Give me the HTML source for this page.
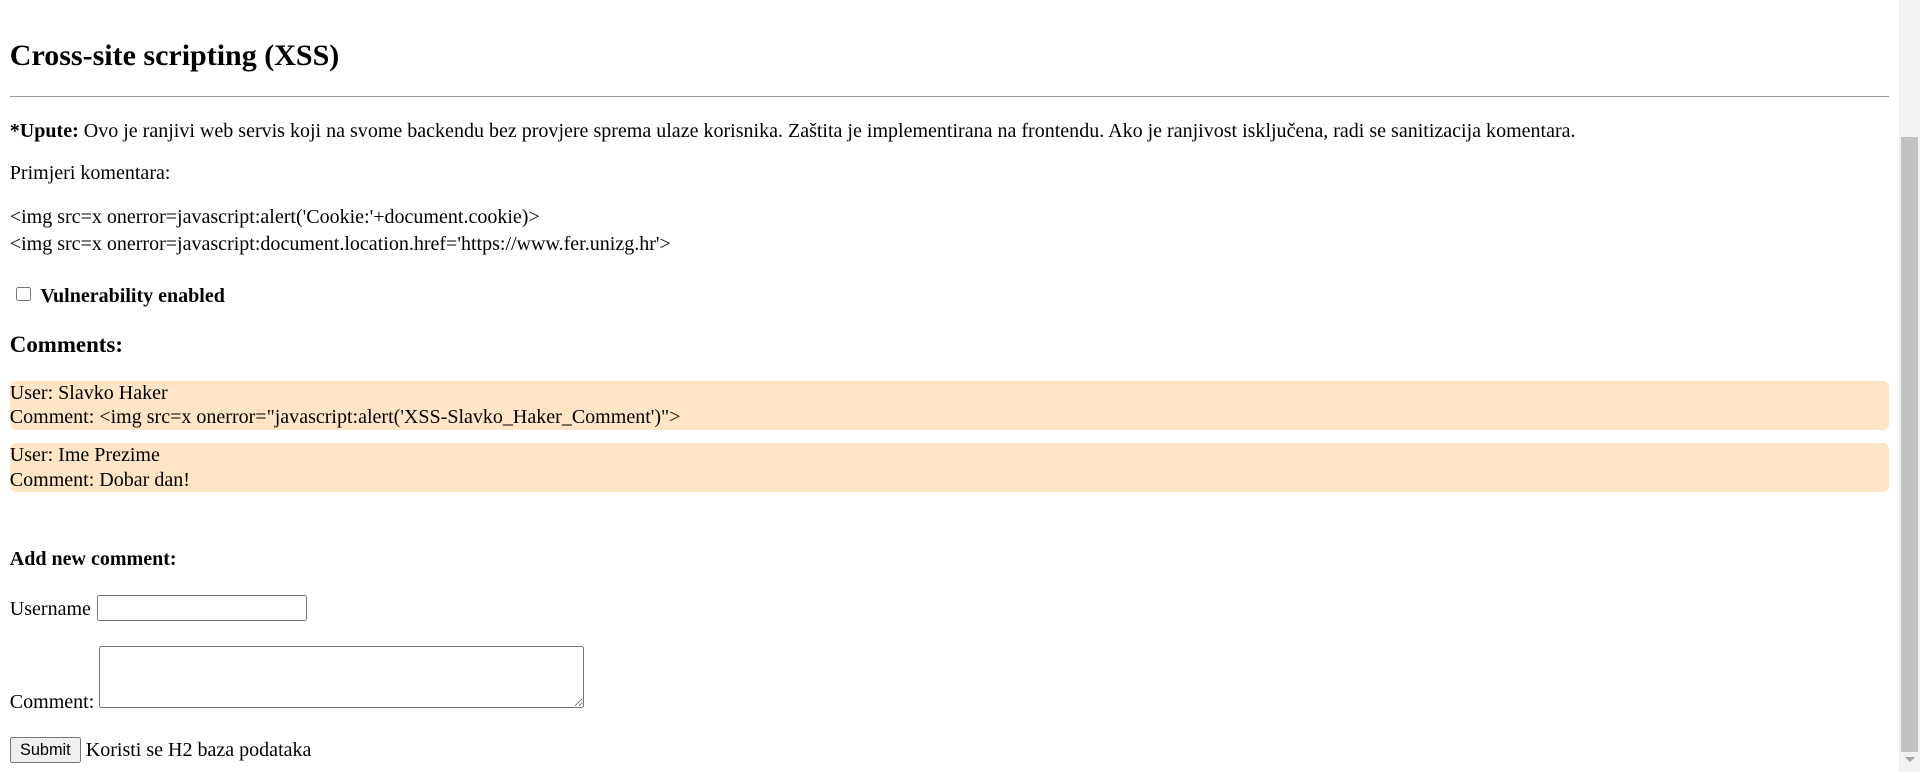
<!DOCTYPE html>
<html><head><meta charset="utf-8"><style>
html,body{margin:0;padding:0;width:1920px;height:772px;overflow:hidden;background:#fff}
#w{position:absolute;left:0;top:0;width:1550px;height:630px;zoom:1.225;font-family:"Liberation Serif",serif;font-size:16.35px;color:#000}
#w>*{position:absolute;margin:0;white-space:nowrap}
.l{left:8px;line-height:18px}
h2{font-size:24.5px;line-height:28px;left:8px}
hr{left:8px;width:1534px;border:0;border-top:1px solid #9a9a9a;height:0}
.box{left:8px;width:1534px;background:#ffe5c5;border-radius:5px;line-height:20px}
input,textarea,button{position:absolute;box-sizing:border-box;margin:0}
#sb{position:absolute;left:1899px;top:0;width:21px;height:772px;background:#f1f1f1}
#th{position:absolute;left:1901px;top:137px;width:17px;height:615px;background:#c1c1c1}
#ar{position:absolute;left:1905px;top:757px;width:0;height:0;border-left:5px solid transparent;border-right:5px solid transparent;border-top:5px solid #a3a3a3}
</style></head><body>
<div id="w">
<h2 style="top:32px">Cross-site scripting (XSS)</h2>
<hr style="top:78px">
<div class="l" style="top:98px"><b>*Upute:</b> Ovo je ranjivi web servis koji na svome backendu bez provjere sprema ulaze korisnika. Zaštita je implementirana na frontendu. Ako je ranjivost isključena, radi se sanitizacija komentara.</div>
<div class="l" style="top:132px">Primjeri komentara:</div>
<div class="l" style="top:168px">&lt;img src=x onerror=javascript:alert('Cookie:'+document.cookie)&gt;</div>
<div class="l" style="top:190px">&lt;img src=x onerror=javascript:document.location.href='https://www.fer.unizg.hr'&gt;</div>
<div style="left:13px;top:234px;width:12px;height:12px;border:1px solid #767676;border-radius:2px;box-sizing:border-box"></div>
<div class="l" style="top:233px;left:33px"><b>Vulnerability enabled</b></div>
<div class="l" style="top:271px;font-size:18.7px;line-height:22px"><b>Comments:</b></div>
<div class="box" style="top:311px;height:40px">User: Slavko Haker<br>Comment: &lt;img src=x onerror="javascript:alert('XSS-Slavko_Haker_Comment')"&gt;</div>
<div class="box" style="top:362px;height:40px">User: Ime Prezime<br>Comment: Dobar dan!</div>
<div class="l" style="top:447px"><b>Add new comment:</b></div>
<div class="l" style="top:488px">Username</div>
<input style="left:79px;top:486px;width:172px;height:21px;border:1px solid #767676;border-radius:2px">
<div class="l" style="top:564px">Comment:</div>
<textarea style="left:81px;top:527px;width:396px;height:51px;border:1px solid #767676;border-radius:2px"></textarea>
<button style="left:8px;top:602px;width:58px;height:21px;font-family:'Liberation Sans',sans-serif;font-size:13.3px;border:1px solid #767676;border-radius:2px;background:#efefef;padding:0">Submit</button>
<div class="l" style="top:603px;left:70px">Koristi se H2 baza podataka</div>
</div>
<div id="sb"></div><div id="th"></div><div id="ar"></div>
</body></html>
